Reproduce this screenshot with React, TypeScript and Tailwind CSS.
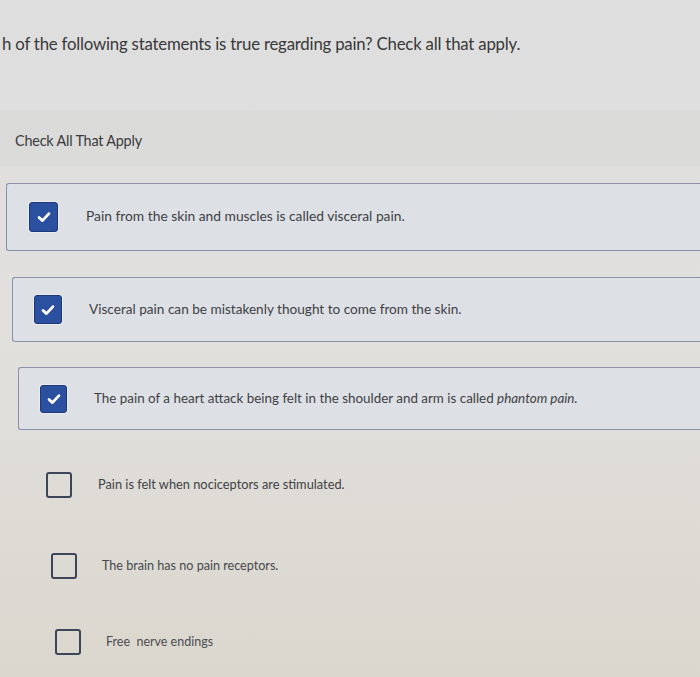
import React from "react";

const Check = () => (
  <svg viewBox="0 0 16 16" className="w-[18px] h-[18px]" fill="none">
    <path d="M3.6 8.4 L6.6 11.2 L12.4 5" stroke="white" strokeWidth="2.5" strokeLinecap="round" strokeLinejoin="round" />
  </svg>
);

const Checked = ({ w, h }: { w: string; h: string }) => (
  <div className={`${w} ${h} shrink-0 rounded-[3px] bg-[#2c50a0] border border-[#1e3878] flex items-center justify-center shadow-[0_0_0_1px_rgba(255,255,255,0.35)]`}>
    <Check />
  </div>
);

const Unchecked = () => (
  <div className="w-[26px] h-[26px] shrink-0 rounded-[3px] border-2 border-[#3d4558]" />
);

export default function App() {
  return (
    <div
      className="w-[700px] h-[677px] overflow-hidden bg-gradient-to-b from-[#dfdedf] via-[#e1e0dd] to-[#dbd7ce] text-[#3b3b3d]"
      style={{ fontFamily: "Lato, 'Open Sans', sans-serif" }}
    >
      <div className="h-[110px] pt-[33px] pl-[2px] text-[16.8px] leading-[22px] text-[#383838] tracking-[-0.2px]">
        h of the following statements is true regarding pain? Check all that apply.
      </div>
      <div className="h-[56px] bg-[#d9d9d9]/70 pl-[15px] pt-[22px] text-[14.4px] leading-[18px] text-[#3a3a3c] tracking-[-0.2px]">
        Check All That Apply
      </div>

      <div className="flex flex-col pt-[17px]">
        <div className="ml-[6px] h-[68px] flex items-center rounded-l-[3px] border-[1.5px] border-r-0 border-[#8a90aa] bg-[#dde0e5] pl-[22px]">
          <Checked w="w-[29px]" h="h-[30px]" />
          <span className="ml-[28px] text-[13.8px] text-[#3e3f44] -mt-[1px]">
            Pain from the skin and muscles is called visceral pain.
          </span>
        </div>
        <div className="mt-[26px] ml-[12px] h-[65px] flex items-center rounded-l-[3px] border-[1.5px] border-r-0 border-[#8a90aa] bg-[#dde0e5] pl-[21px]">
          <Checked w="w-[28px]" h="h-[29px]" />
          <span className="ml-[27px] text-[13.6px] text-[#3e3f44]">
            Visceral pain can be mistakenly thought to come from the skin.
          </span>
        </div>
        <div className="mt-[25px] ml-[18px] h-[63px] flex items-center rounded-l-[3px] border-[1.5px] border-r-0 border-[#8a90aa] bg-[#dde0e5] pl-[21px]">
          <Checked w="w-[27px]" h="h-[28px]" />
          <span className="ml-[27px] text-[13.4px] text-[#3e3f44] -mt-[1px]">
            The pain of a heart attack being felt in the shoulder and arm is called <i>phantom pain.</i>
          </span>
        </div>

        <div className="mt-[28px] ml-[46px] h-[54px] flex items-center">
          <Unchecked />
          <span className="ml-[26px] text-[12.8px] text-[#404145]">Pain is felt when nociceptors are stimulated.</span>
        </div>
        <div className="mt-[27px] ml-[51px] h-[54px] flex items-center">
          <Unchecked />
          <span className="ml-[25px] text-[12.6px] text-[#47484c]">The brain has no pain receptors.</span>
        </div>
        <div className="mt-[22px] ml-[55px] h-[54px] flex items-center">
          <Unchecked />
          <span className="ml-[25px] text-[12.5px] text-[#4c4d51] whitespace-pre">Free  nerve endings</span>
        </div>
      </div>
    </div>
  );
}
